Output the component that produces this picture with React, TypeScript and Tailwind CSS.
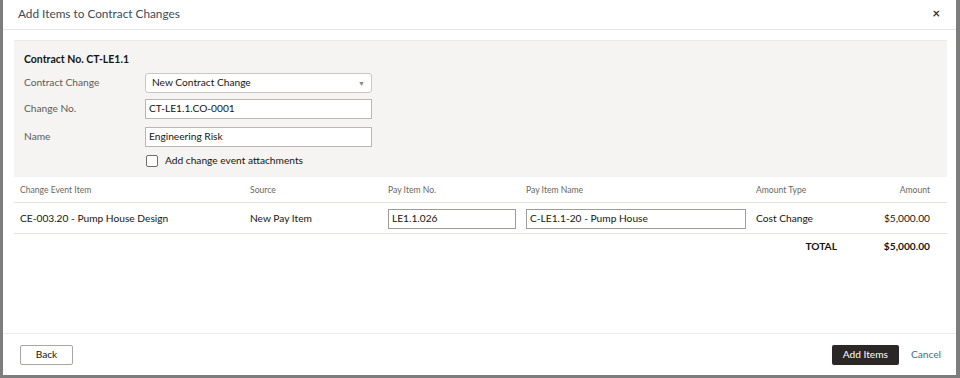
import React from "react";

export default function App() {
  return (
    <div className="w-[960px] h-[378px] bg-[#7d7d7d] flex overflow-hidden" style={{ fontFamily: '"Lato", "Open Sans", sans-serif' }}>
      <div className="ml-[3px] w-[953px] h-[375px] bg-white flex flex-col">
        {/* Header */}
        <div className="h-[30px] border-b border-[#e6e6e6] flex items-center justify-between pl-[15px] pr-[16px] pb-[2px]">
          <span className="text-[11.8px] text-[#3c4a5c]">Add Items to Contract Changes</span>
          <span className="text-[13px] text-[#333] font-bold leading-none">×</span>
        </div>
        {/* Body */}
        <div className="pl-[11px] pr-[9px] pt-[10px] flex-1 flex flex-col">
          <div className="bg-[#f5f4f2] border-t border-[#ebeae7] px-[10px] pt-[11px] pb-[10px] h-[137px]">
            <div className="text-[10.5px] font-bold text-[#161513] leading-[14px]">Contract No. CT-LE1.1</div>
            <div className="mt-[7px] flex items-center h-[20px]">
              <span className="w-[121px] text-[10.2px] text-[#5e5c59]">Contract Change</span>
              <div className="w-[227px] h-[20px] bg-white border border-[#c9c7c3] rounded-[3px] flex items-center justify-between pl-[6px] pr-[6px]">
                <span className="text-[10.2px] text-[#161513]">New Contract Change</span>
                <span className="text-[7px] text-[#8a8884]">▼</span>
              </div>
            </div>
            <div className="mt-[6px] flex items-center h-[20px]">
              <span className="w-[121px] text-[10.2px] text-[#5e5c59]">Change No.</span>
              <div className="w-[227px] h-[20px] bg-white border border-[#b9b7b3] flex items-center pl-[3px]">
                <span className="text-[10.2px] text-[#161513]">CT-LE1.1.CO-0001</span>
              </div>
            </div>
            <div className="mt-[8px] flex items-center h-[20px]">
              <span className="w-[121px] text-[10.2px] text-[#5e5c59]">Name</span>
              <div className="w-[227px] h-[20px] bg-white border border-[#b9b7b3] flex items-center pl-[3px]">
                <span className="text-[10.2px] text-[#161513]">Engineering Risk</span>
              </div>
            </div>
            <div className="mt-[7px] flex items-center h-[14px] pl-[122px]">
              <div className="w-[12px] h-[12px] bg-white border border-[#6f6d69] rounded-[2px]" />
              <span className="ml-[7px] text-[10.2px] text-[#161513]">Add change event attachments</span>
            </div>
          </div>
          {/* Table */}
          <div>
            <div className="h-[26px] border-b border-[#e4e3e0] flex items-center text-[8.6px] text-[#6b6965] pt-[1px]">
              <span className="w-[236px] pl-[6px]">Change Event Item</span>
              <span className="w-[138px]">Source</span>
              <span className="w-[138px]">Pay Item No.</span>
              <span className="w-[230px]">Pay Item Name</span>
              <span className="w-[100px]">Amount Type</span>
              <span className="w-[74px] text-right">Amount</span>
            </div>
            <div className="h-[31px] border-b border-[#e4e3e0] flex items-center text-[10.2px] text-[#161513] pt-[1px]">
              <span className="w-[236px] pl-[6px]">CE-003.20 - Pump House Design</span>
              <span className="w-[138px]">New Pay Item</span>
              <div className="w-[138px]">
                <div className="w-[128px] h-[20px] border border-[#9e9c98] flex items-center pl-[3px]">LE1.1.026</div>
              </div>
              <div className="w-[230px]">
                <div className="w-[220px] h-[20px] border border-[#9e9c98] flex items-center pl-[3px]">C-LE1.1-20 - Pump House</div>
              </div>
              <span className="w-[100px]">Cost Change</span>
              <span className="w-[74px] text-right">$5,000.00</span>
            </div>
            <div className="h-[24px] flex items-center text-[10.2px] font-bold text-[#161513] pt-[1px]">
              <span className="w-[823px] text-right">TOTAL</span>
              <span className="w-[93px] text-right">$5,000.00</span>
            </div>
          </div>
        </div>
        {/* Footer */}
        <div className="h-[42px] border-t border-[#ebebeb] flex items-center justify-between pl-[17px] pr-[15px]">
          <div className="w-[53px] h-[20px] border border-[#a9a7a3] rounded-[2px] flex items-center justify-center text-[10.2px] text-[#161513]">Back</div>
          <div className="flex items-center">
            <div className="w-[67px] h-[20px] bg-[#2b2726] rounded-[2px] flex items-center justify-center text-[10.2px] text-white">Add Items</div>
            <span className="ml-[12px] text-[10.2px] text-[#2a76a8]">Cancel</span>
          </div>
        </div>
      </div>
    </div>
  );
}
